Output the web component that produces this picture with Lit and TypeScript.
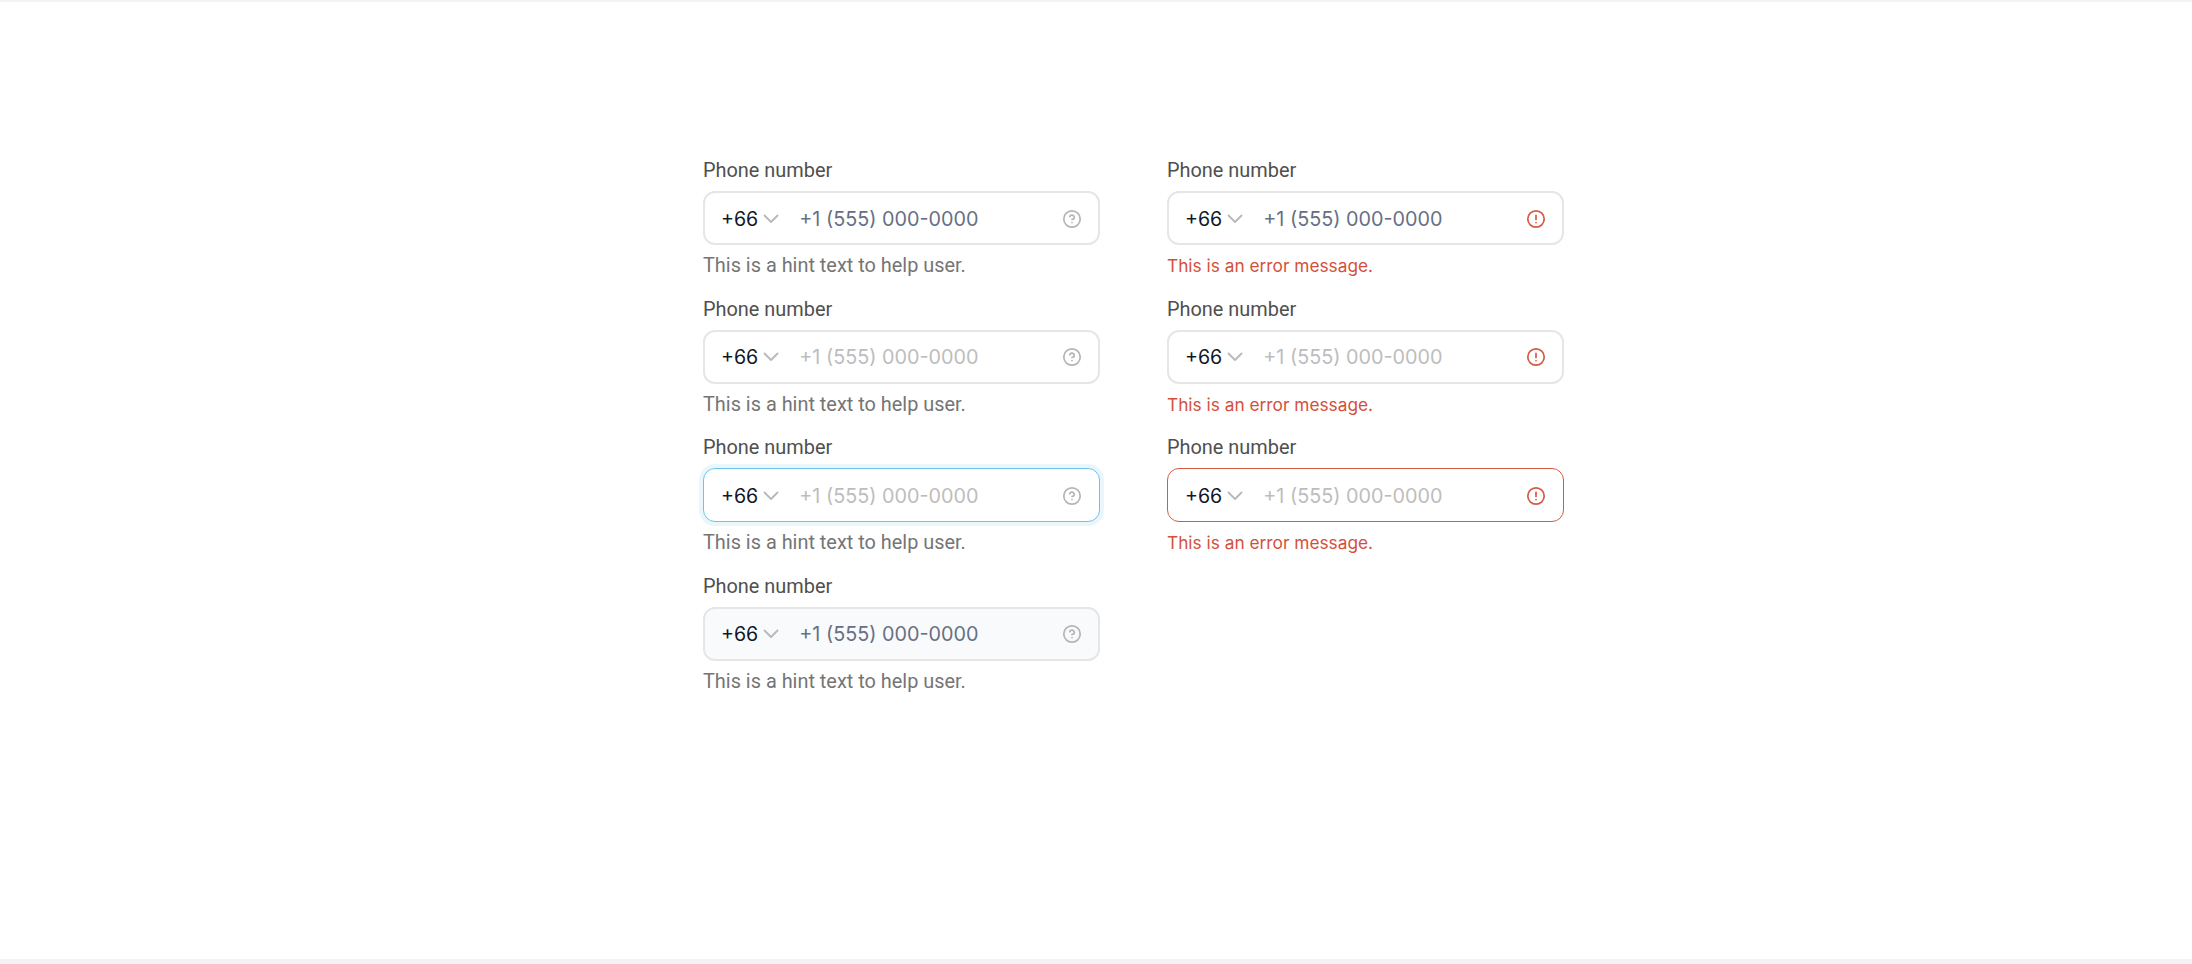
import { LitElement, html, css } from 'lit';
import { customElement, property } from 'lit/decorators.js';
import { classMap } from 'lit/directives/class-map.js';

const helpIcon = html`<svg viewBox="0 0 20 20" width="20" height="20" fill="none" stroke="currentColor" stroke-width="1.7" stroke-linecap="round" stroke-linejoin="round">
  <circle cx="10" cy="10" r="8.2"></circle>
  <path d="M7.7 7.6a2.4 2.4 0 0 1 4.6.8c0 1.6-2.3 2.1-2.3 2.1"></path>
  <path d="M10 13.6h.01"></path>
</svg>`;

const alertIcon = html`<svg viewBox="0 0 20 20" width="20" height="20" fill="none" stroke="currentColor" stroke-width="1.7" stroke-linecap="round" stroke-linejoin="round">
  <circle cx="10" cy="10" r="8.2"></circle>
  <path d="M10 6.4v4"></path>
  <path d="M10 13.6h.01"></path>
</svg>`;

const chevron = html`<svg viewBox="0 0 16 10" width="16" height="10" fill="none" stroke="currentColor" stroke-width="1.8" stroke-linecap="round" stroke-linejoin="round">
  <path d="M1.5 1.5 8 8l6.5-6.5"></path>
</svg>`;

@customElement('phone-field')
class PhoneField extends LitElement {
  @property() state = 'default';
  @property({ type: Boolean }) error = false;

  static styles = css`
    :host {
      display: block;
      height: 138.67px;
    }

    .label {
      font-family: Roboto, sans-serif;
      font-size: 19.9px;
      line-height: 24px;
      color: #4f4f4f;
      margin-bottom: 8px;
    }

    .box {
      display: flex;
      align-items: center;
      box-sizing: border-box;
      height: 54px;
      padding: 1px 16px 0 16px;
      background: #fff;
      border: 2px solid #e6e6e8;
      border-radius: 12px;
    }

    .box.focus,
    .box.invalid {
      border-width: 1px;
      padding: 1px 17px 0 17px;
    }

    .box.focus {
      border-color: #6fc3e8;
      box-shadow: 0 0 0 4px #e9f6fb;
    }

    .box.invalid {
      border-color: #d65a44;
    }

    .box.disabled {
      background: #f9fafb;
    }

    .code {
      font-family: Inter, sans-serif;
      font-size: 19.6px;
      color: #101828;
    }

    .chevron {
      display: flex;
      margin-left: 5px;
      color: #b8b8b8;
    }

    .placeholder {
      flex: 1;
      margin-left: 20px;
      font-family: Inter, sans-serif;
      font-size: 19.8px;
      color: #bdbdbd;
    }

    .placeholder.filled {
      color: #667085;
    }

    .icon {
      display: flex;
      color: #b5b5b5;
    }

    .icon.alert {
      color: #d65a44;
    }

    .hint {
      font-family: Roboto, sans-serif;
      font-size: 19.9px;
      line-height: 24px;
      color: #757575;
      margin-top: 9px;
    }

    .hint.alert {
      font-family: Inter, sans-serif;
      font-size: 17.3px;
      color: #d4503a;
    }
  `;

  render() {
    const boxClasses = {
      box: true,
      focus: this.state === 'focus',
      invalid: this.state === 'invalid',
      disabled: this.state === 'disabled',
    };
    const filled = this.state === 'default' || this.state === 'disabled';
    return html`
      <div class="label">Phone number</div>
      <div class=${classMap(boxClasses)}>
        <span class="code">+66</span>
        <span class="chevron">${chevron}</span>
        <span class=${classMap({ placeholder: true, filled })}>+1 (555) 000-0000</span>
        <span class=${classMap({ icon: true, alert: this.error })}>${this.error ? alertIcon : helpIcon}</span>
      </div>
      <div class=${classMap({ hint: true, alert: this.error })}>
        ${this.error ? 'This is an error message.' : 'This is a hint text to help user.'}
      </div>
    `;
  }
}

@customElement('app-root')
class AppRoot extends LitElement {
  static styles = css`
    :host {
      display: flex;
      flex-direction: column;
      height: 964px;
      background: #fff;
      overflow: hidden;
    }

    .top {
      height: 2px;
      background: #f3f3f3;
    }

    .main {
      flex: 1;
      display: grid;
      grid-template-columns: 397px 397px;
      column-gap: 67px;
      align-content: start;
      padding: 157px 0 0 703px;
    }

    .bottom {
      height: 5px;
      background: #f3f3f3;
    }
  `;

  render() {
    return html`
      <div class="top"></div>
      <div class="main">
        <div>
          <phone-field></phone-field>
          <phone-field state="plain"></phone-field>
          <phone-field state="focus"></phone-field>
          <phone-field state="disabled"></phone-field>
        </div>
        <div>
          <phone-field error></phone-field>
          <phone-field error state="plain"></phone-field>
          <phone-field error state="invalid"></phone-field>
        </div>
      </div>
      <div class="bottom"></div>
    `;
  }
}
